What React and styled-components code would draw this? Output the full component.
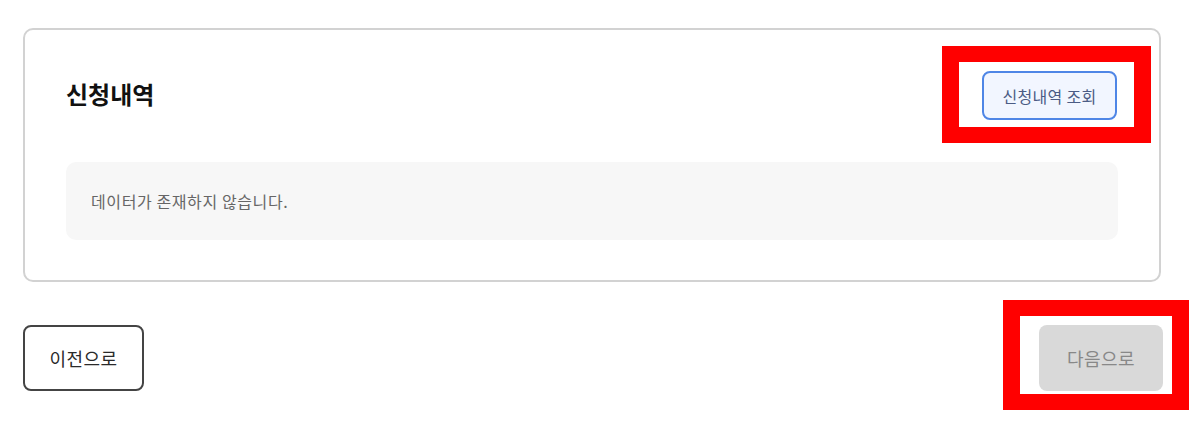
import React from 'react';
import styled, { createGlobalStyle } from 'styled-components';

const GlobalStyle = createGlobalStyle`
  html, body {
    margin: 0;
    background: #fff;
    font-family: "Noto Sans CJK KR", "Noto Sans", sans-serif;
  }
`;

const Page = styled.div`
  width: 1163px;
  min-height: 429px;
  box-sizing: border-box;
  padding: 28px 0 30px 23px;
`;

const Card = styled.section`
  width: 1138px;
  box-sizing: border-box;
  border: 2px solid #d2d2d2;
  border-radius: 10px;
  padding: 41px 41px 40px 41px;
`;

const Header = styled.div`
  display: flex;
  justify-content: space-between;
  align-items: center;
  height: 49px;
  padding-right: 1px;
`;

const Title = styled.h3`
  margin: -5px 0 0;
  font-size: 24px;
  font-weight: 700;
  color: #111;
`;

// red annotation frame drawn around a button; negative margins keep it out of the layout
const Highlight = styled.div`
  display: inline-flex;
  border: solid #ff0000;
  border-width: 16px 17px;
  padding: ${p => `${p.$top - 16}px ${p.$right - 17}px ${p.$bottom - 16}px ${p.$left - 17}px`};
  margin: ${p => `-${p.$top}px -${p.$right}px -${p.$bottom}px -${p.$left}px`};
  background: #fff;
`;

const InquiryButton = styled.button`
  width: 135px;
  height: 49px;
  border: 2px solid #4f86e6;
  border-radius: 8px;
  background: #f2f6ff;
  color: #4b5c85;
  font-family: inherit;
  font-size: 16px;
  letter-spacing: 0.3px;
  padding: 0;
  cursor: pointer;
`;

const EmptyBox = styled.div`
  margin-top: 42px;
  height: 78px;
  display: flex;
  align-items: center;
  padding-left: 25px;
  background: #f7f7f7;
  border-radius: 10px;
  color: #666;
  font-size: 16px;
  letter-spacing: 0.6px;
`;

const Footer = styled.div`
  margin-top: 43px;
  display: flex;
  justify-content: space-between;
  align-items: center;
`;

const NavButton = styled.button`
  width: ${props => props.$width}px;
  height: 66px;
  border-radius: 8px;
  padding: 0;
  font-family: inherit;
  font-size: 18px;
  letter-spacing: 0.5px;
  cursor: ${props => (props.disabled ? 'default' : 'pointer')};
  border: ${props => (props.disabled ? 'none' : '2px solid #444')};
  background: ${props => (props.disabled ? '#d9d9d9' : '#fff')};
  color: ${props => (props.disabled ? '#888' : '#2a2a2a')};
`;

const App = () => (
  <>
    <GlobalStyle />
    <Page>
      <Card>
        <Header>
          <Title>신청내역</Title>
          <Highlight $top={25} $right={34} $bottom={23} $left={40}>
            <InquiryButton>신청내역 조회</InquiryButton>
          </Highlight>
        </Header>
        <EmptyBox>데이터가 존재하지 않습니다.</EmptyBox>
      </Card>
      <Footer>
        <NavButton $width={121}>이전으로</NavButton>
        <Highlight $top={25} $right={26} $bottom={19} $left={36}>
          <NavButton $width={124} disabled>다음으로</NavButton>
        </Highlight>
      </Footer>
    </Page>
  </>
);

export default App;
